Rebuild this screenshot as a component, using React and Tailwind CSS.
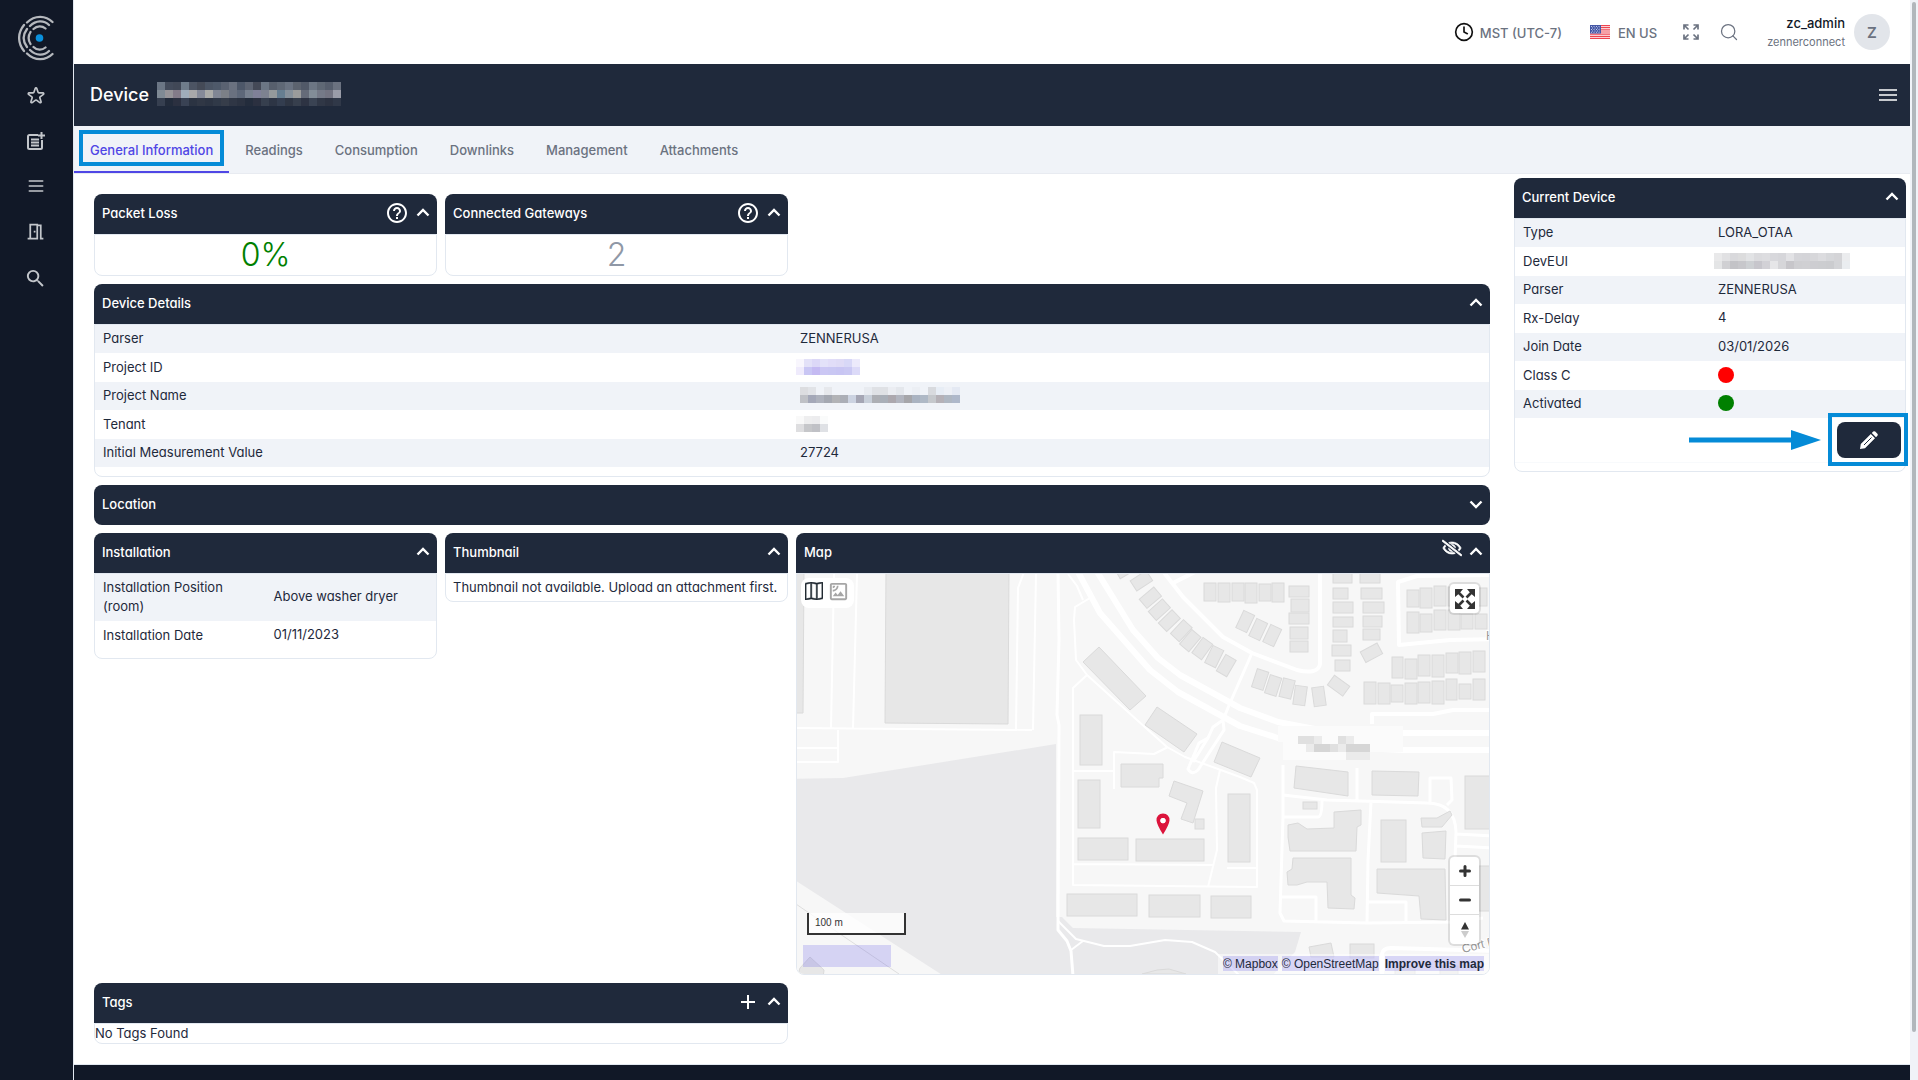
import React, { useState } from 'react';
import { Clock4, Search } from 'lucide-react';
import { MdSearch, MdHelpOutline, MdOutlineMeetingRoom, MdOutlineSatellite, MdAdd } from 'react-icons/md';
import { FaRegEyeSlash } from 'react-icons/fa';
import { BsMap } from 'react-icons/bs';
import { HiOutlineStar, HiOutlineMenu } from 'react-icons/hi';

const tabs = ['General Information', 'Readings', 'Consumption', 'Downlinks', 'Management', 'Attachments'];

// masked values, one list of colours per row of blocks
const masks = {
  title: [
    ['#6b7685', '#434b5b', '#414857', '#6f7c8b', '#4c5463', '#444a57', '#4b5565', '#4e596a', '#5a6272', '#6a7180', '#4d5769', '#5d6473', '#444957', '#6b7685', '#575f6d', '#5f6876', '#6a7382', '#5c636f', '#515968', '#6c7684', '#5f6875', '#565e6d', '#6b7280'],
    ['#7f8a95', '#969499', '#837b89', '#a0adbb', '#a8a8aa', '#858a99', '#aaaba9', '#808694', '#7c8087', '#6a7180', '#5d6779', '#77808f', '#7f8098', '#7d8290', '#959a9c', '#667e91', '#85909b', '#9b9c9c', '#656b79', '#828d98', '#757a88', '#737482', '#9a9ca8'],
    ['#363f50', '#222b3b', '#2b3040', '#394254', '#2b3342', '#303745', '#2c3443', '#303948', '#363d4a', '#2f3645', '#2b3241', '#232c3c', '#2b3040', '#363f4e', '#2d3545', '#333d4f', '#2e3543', '#373f4d', '#2d3343', '#3a4353', '#303746', '#2c3241', '#303848'],
  ],
  projectId: [
    ['#f8f6fd', '#e3e1f8', '#dcd8f7', '#e3e2f9', '#e1ddf8', '#dfdbf6', '#d8d8f7', '#eceafb'],
    ['#efebfc', '#c9c6f4', '#c4baf2', '#cbc7f4', '#c9c7f3', '#c8c5f3', '#cac8f3', '#dcdaf8'],
  ],
  projectName: [
    ['#dcdde0', '#e1e3e7', '#f0f3f8', '#e6e8ec', '#f0f3f8', '#f0f3f8', '#f0f3f8', '#f0f3f8', '#e8ebf0', '#dfe1e5', '#dfe1e5', '#ebedf2', '#e4e7ec', '#f0f3f8', '#eceff4', '#f0f3f8', '#d8dade', '#e7edf5', '#edf0f6', '#e4e9f3'],
    ['#bfc1c6', '#a4a8b8', '#aeb2bd', '#a4a8b1', '#b2b3b6', '#abaeb6', '#ccd3e1', '#a5a6b4', '#c8cfd9', '#adafb4', '#a9afb8', '#aca8ae', '#b2b5bf', '#a6a6aa', '#aab3c1', '#afb9c6', '#c5c8cc', '#b5b1b7', '#afb7c2', '#aeb8ca'],
  ],
  tenant: [
    ['#f9f9f9', '#eeeeef', '#ececee', '#fafbfb'],
    ['#dedee0', '#c6c7ca', '#c0c1c6', '#dfe1e5'],
  ],
  devEui: [
    ['#e9e9ea', '#e1e1e3', '#d9d9dc', '#dcdcdd', '#e2e3e5', '#dbdbde', '#dddde0', '#d8d8dc', '#d6d6da', '#e2e2e5', '#d5d5d9', '#d4d4d8', '#d7d7da', '#dcdcdf', '#d6d7da', '#d4d4d7', '#ebecee'],
    ['#e4e5e6', '#d0d0d3', '#c3c3c7', '#c7c7cb', '#cdd0d3', '#c7c6cc', '#d2d1d6', '#e6e6e8', '#d6d6d9', '#c7c6ca', '#cfcfd2', '#d0d0d3', '#cdcdd1', '#cccdd0', '#cbcccf', '#d3d4d7', '#eaedf0'],
  ],
};

const Masked = ({ rows }) => (
  <div className="inline-block align-middle">
    {rows.map((row, i) => (
      <div key={i} className="flex">
        {row.map((color, j) => <span key={j} className="block h-2 w-2" style={{ backgroundColor: color }} />)}
      </div>
    ))}
  </div>
);

const Dot = ({ className }) => <span className={`block h-4 w-4 rounded-full ${className}`} />;

const deviceDetails = [
  ['Parser', 'ZENNERUSA'],
  ['Project ID', <div className="-ml-1 flex"><Masked rows={masks.projectId} /></div>],
  ['Project Name', <div className="flex"><Masked rows={masks.projectName} /></div>],
  ['Tenant', <div className="-ml-1 flex"><Masked rows={masks.tenant} /></div>],
  ['Initial Measurement Value', '27724'],
];

const currentDevice = [
  ['Type', 'LORA_OTAA'],
  ['DevEUI', <div className="-ml-1 flex"><Masked rows={masks.devEui} /></div>],
  ['Parser', 'ZENNERUSA'],
  ['Rx-Delay', '4'],
  ['Join Date', '03/01/2026'],
  ['Class C', <Dot className="bg-[#ff0000]" />],
  ['Activated', <Dot className="bg-[#008000]" />],
];

const installation = [
  ['Installation Position (room)', 'Above washer dryer'],
  ['Installation Date', '01/11/2023'],
];

const DataTable = ({ rows }) => (
  <table className="w-full table-fixed">
    <tbody>
      {rows.map(([label, value]) => (
        <tr key={label} className="h-[29px] odd:h-7 odd:bg-[#f0f3f8]">
          <th scope="row" className="w-1/2 px-2 pb-[5px] pt-1 text-left font-normal">{label}</th>
          <td className="w-1/2 px-2 pb-[2px]">{value}</td>
        </tr>
      ))}
    </tbody>
  </table>
);

const Chevron = ({ up }) => (
  <svg width="20" height="20" viewBox="0 0 20 20" fill="none" stroke="currentColor" strokeWidth="2.400">
    <path d={up ? 'M4.500 12.500L10 7L15.500 12.500' : 'M4.500 7.500L10 13L15.500 7.500'} />
  </svg>
);

const Panel = ({ title, actions, className = '', children }) => {
  const [open, setOpen] = useState(children !== undefined);

  return (
    <section className={`leading-[19px] ${className}`}>
      <div className={`flex h-10 items-center justify-between bg-[#1f293b] pb-[2px] pl-2 pr-1 text-white ${open ? 'rounded-t-lg' : 'rounded-lg'}`}>
        <h2 className="font-medium">{title}</h2>
        <div className="flex items-center gap-1">
          {actions}
          <button type="button" aria-label={`Toggle ${title}`} onClick={() => setOpen(!open)}>
            <Chevron up={open} />
          </button>
        </div>
      </div>
      {open && <div className="overflow-hidden rounded-b-lg border border-[#e2e8f0]">{children}</div>}
    </section>
  );
};

const HelpButton = () => (
  <button type="button" aria-label="Help"><MdHelpOutline size={24} /></button>
);

const Logo = () => (
  <svg width="36" height="46" viewBox="0 0 36 46" fill="none" stroke="#b5b8bd" strokeWidth="2.300" strokeLinecap="round">
    <circle cx="21.500" cy="23" r="3.800" fill="#0a90dc" stroke="none" />
    <path d="M9 7.500C17 -.5 28 .5 34.500 7M12 11C18 5 26 5 31 10M15.500 14C19 10.500 24 10.500 27.500 13.500" />
    <path d="M9 38.500C17 46.500 28 45.500 34.500 39M12 35C18 41 26 41 31 36M15.500 32C19 35.500 24 35.500 27.500 32.500" />
    <path d="M6 10C-.5 18 -.5 28 6 36M9 14C4.500 20 4.500 26 9 32M12.500 17C10 21 10 25 12.500 29" />
  </svg>
);

const NoteAddIcon = () => (
  <svg width="20" height="20" viewBox="0 0 20 20" fill="none" stroke="currentColor" strokeWidth="2">
    <path d="M12 4H3.500Q2 4 2 5.500V16.500Q2 18 3.500 18H14.500Q16 18 16 16.500V9M5 8.500H13M5 11.500H13M5 14.500H13M15.500 1V8M12 4.500H19" />
  </svg>
);

const MenuIcon = () => (
  <svg width="18" height="14" viewBox="0 0 18 14" stroke="currentColor" strokeWidth="1.500">
    <path d="M0 2H18M0 7H18M0 12H18" />
  </svg>
);

const PencilIcon = () => (
  <svg width="18" height="18" viewBox="0 0 18 18" fill="currentColor">
    <path d="M0 18L.8 13L10.800 3L15 7.200L5 17.200ZM11.800 2L13.200 .6Q14.200 -.2 15.200 .6L17.400 2.800Q18.200 3.800 17.400 4.800L16 6.200Z" />
    <path stroke="#1f293b" strokeWidth="1" d="M4 14L11.500 6.500" />
  </svg>
);

const PinIcon = () => (
  <svg width="14" height="22" viewBox="0 0 14 22" className="absolute left-[359px] top-[239px]">
    <path fill="#dc143c" fillRule="evenodd" d="M7 .5Q13.500 .8 13.500 7.500Q13 12 7 21.500Q1 12 .5 7.500Q.5 .8 7 .5ZM7 5A2.600 2.600 0 1 0 7 10.200A2.600 2.600 0 1 0 7 5Z" />
    <circle cx="7" cy="7.600" r="2.600" fill="#fff" />
  </svg>
);

const Flag = () => (
  <svg width="20" height="14" viewBox="0 0 20 14">
    <path fill="#fff" d="M0 0H20V14H0Z" />
    <path stroke="#ee4450" strokeWidth="1.200" d="M0 .6H20M0 2.700H20M0 4.900H20M0 7H20M0 9.100H20M0 11.300H20M0 13.400H20" />
    <path fill="#4456a5" d="M0 0H11V8.500H0Z" />
    <path stroke="#c3cbe8" strokeWidth="1" strokeDasharray="1 1.500" d="M1 1.500H10M2 3H10M1 4.500H10M2 6H10M1 7.300H10" />
  </svg>
);

const ExpandIcon = () => (
  <svg width="16" height="16" viewBox="0 0 16 16" fill="none" stroke="currentColor" strokeWidth="1.700">
    <path d="M1 5.500V1H5.500M1 1L5.500 5.500M10.500 1H15V5.500M15 1L10.500 5.500M1 10.500V15H5.500M1 15L5.500 10.500M10.500 15H15V10.500M15 15L10.500 10.500" />
  </svg>
);

const FullscreenIcon = () => (
  <svg width="20" height="20" viewBox="0 0 20 20" fill="#333" stroke="#333">
    <path stroke="none" d="M0 0H8L5.500 3L3 5.500L0 8ZM20 0V8L17 5.500L14.500 3L12 0ZM0 20V12L3 14.500L5.500 17L8 20ZM20 20H12L14.500 17L17 14.500L20 12Z" />
    <path strokeWidth="2.600" d="M3 3L8.500 8.500M17 3L11.500 8.500M3 17L8.500 11.500M17 17L11.500 11.500" />
  </svg>
);

// map shapes share one coordinate system with the viewBox below
const blocks = [
  [1204, 583, 12, 18], [1218, 583, 12, 19], [1232, 583, 12, 18], [1245, 583, 12, 20], [1259, 584, 12, 17], [1272, 583, 12, 19],
  [1289, 586, 20, 11], [1291, 599, 18, 13], [1289, 613, 20, 11], [1290, 627, 18, 12], [1290, 641, 18, 11],
  [1333, 572, 19, 11], [1333, 588, 15, 11], [1333, 602, 20, 11], [1333, 617, 20, 10], [1333, 630, 14, 12], [1332, 645, 19, 11], [1335, 660, 15, 11],
  [1360, 572, 20, 11], [1361, 588, 21, 11], [1363, 602, 21, 11], [1363, 616, 19, 11], [1363, 629, 17, 11],
  [1407, 590, 12, 17], [1420, 588, 12, 20], [1434, 586, 12, 20], [1448, 587, 12, 19], [1461, 588, 12, 18], [1475, 588, 12, 18],
  [1407, 612, 12, 21], [1420, 614, 12, 18], [1434, 610, 12, 20], [1448, 610, 12, 20], [1461, 614, 12, 15], [1475, 614, 12, 15],
  [1392, 657, 11, 21], [1405, 659, 12, 20], [1418, 655, 12, 21], [1432, 655, 12, 22], [1446, 653, 12, 20], [1459, 652, 12, 22], [1473, 651, 12, 21],
  [1364, 682, 12, 22], [1378, 683, 12, 21], [1391, 685, 12, 17], [1405, 683, 12, 21], [1418, 682, 12, 21], [1432, 681, 12, 23], [1446, 679, 11, 21], [1459, 684, 12, 15], [1473, 679, 12, 21],
  [1080, 715, 22, 50], [1078, 780, 22, 48], [1078, 838, 50, 22], [1136, 839, 68, 22], [1195, 819, 9, 10], [1228, 794, 22, 68],
  [1067, 894, 70, 22], [1149, 895, 51, 22], [1211, 896, 40, 22], [1303, 802, 14, 7], [1465, 776, 30, 53], [1381, 820, 25, 42],
  [1479, 866, 16, 45], [1350, 944, 24, 14], [1395, 966, 20, 10], [1440, 966, 18, 10],
];

const houses = [
  [1125, 569, 60], [1141, 581, 57], [1150, 598, 50], [1159, 610, 48], [1169, 621, 46], [1181, 631, 43], [1190, 641, 40], [1202, 649, 36], [1214, 657, 26], [1226, 666, 30],
  [1245, 622, 25], [1258, 630, 25], [1272, 636, 25],
  [1260, 680, 18], [1273, 686, 18], [1287, 689, 14], [1300, 696, 8], [1319, 697, -8], [1339, 686, -54], [1371, 653, 62],
];

const buildings = [
  '886,570 1009,570 1008,724 885,723',
  '790,570 804,570 803,713 790,713',
  '1099,647 1146,696 1130,710 1083,662',
  '1157,707 1197,734 1184,752 1145,725',
  '1121,764 1163,764 1163,778 1159,778 1159,787 1121,787',
  '1174,781 1203,791 1193,823 1181,819 1187,803 1169,796',
  '1222,742 1260,758 1251,777 1214,762',
  '1296,766 1348,772 1348,796 1294,788',
  '1372,771 1419,772 1418,796 1372,795',
  '1288,825 1298,823 1307,829 1334,828 1334,812 1361,810 1361,825 1357,827 1356,851 1290,851 1288,837',
  '1293,858 1351,858 1351,895 1355,898 1354,909 1328,908 1327,882 1307,882 1297,885 1288,885 1287,872 1292,869',
  '1421,818 1437,818 1450,811 1452,815 1442,827 1422,827',
  '1422,833 1446,831 1445,859 1423,858',
  '1377,869 1445,869 1446,920 1421,919 1419,896 1377,893',
  '1309,947 1331,943 1334,957 1311,957',
  '797,978 800,968 810,957 824,970 823,978',
  '1142,974 1157,970 1169,969 1186,974',
];

const MapDrawing = () => (
  <svg className="absolute inset-0 h-full w-full" viewBox="797 574 692 400" preserveAspectRatio="xMidYMid slice">
    <path fill="#f7f7f7" d="M0 0H2400V1400H0Z" />
    <path fill="#e9e9eb" d="M790 779L843 778L1056 744V917H1062L1073 928L1301 932L1295 952L1268 980H950L790 877Z" />
    <path stroke="#dedede" d="M790 900L899 974" />
    <g fill="none" stroke="#fff" strokeWidth="2" strokeLinejoin="round">
      <path d="M834 574L831 728M857 574L853 729M790 728L1032 730M790 748H838M838 730V762H790M1024 572L1018 588L1016 729M1036 574L1033 730" />
      <path strokeWidth="3" d="M1058 572L1059 640L1057 715L1059 725L1058 930L1067 941L1071 951L1073 976" />
      <path d="M1068 574L1077 586L1083 600M1090 598L1075 607L1074 620L1076 660L1087 675L1167 747L1185 757L1240 777L1254 783L1257 790V887L1073 885V688L1087 675M1073 771H1114M1114 789V752L1154 754L1168 747M1073 864L1213 865M1220 770L1216 788L1217 850L1208 887M1227 868H1257" />
      <path strokeWidth="6" d="M1077 570L1100 613L1150 670L1178 692L1240 726L1278 738L1340 747L1403 750H1495M1096 570L1133 630L1158 658L1180 675L1240 708L1278 722L1320 730L1403 733H1495" />
      <path strokeWidth="4" d="M1162 570L1183 597L1223 637L1252 653L1297 670Q1318 675 1320 664V570M1171 584L1195 572M1495 575L1417 576L1398 582L1399 645L1450 640L1495 639M1372 724V714H1433L1453 710H1495" />
      <path strokeWidth="3" d="M1252 653L1230 703L1223 720L1213 727L1208 738L1193 762M1223 720L1224 730L1198 770Q1192 776 1188 769L1199 743L1208 738" />
      <path strokeWidth="3" d="M1283 765V817L1280 913L1284 921L1367 923L1457 922L1483 918M1283 795L1327 800L1427 803Q1455 803 1456 832L1455 860M1357 768V800M1430 802V778H1451L1452 800L1447 805M1283 817H1318Q1322 817 1322 800M1371 802L1368 860L1367 923M1282 897H1316V922M1368 902H1406V922M1456 834L1495 836M1456 846L1495 848" />
      <path strokeWidth="4" d="M1382 976V954Q1383 948 1391 948L1495 951" />
      <path d="M1058 921L1076 939L1104 946H1130L1165 940L1192 942L1215 952L1240 976M1071 950L1083 941" />
    </g>
    <g fill="#e7e7e7" stroke="#dadada">
      {blocks.map(([x, y, w, h]) => <rect key={`${x}-${y}`} x={x} y={y} width={w} height={h} />)}
      {houses.map(([x, y, angle]) => <rect key={`${x}-${y}`} x={x - 6} y={y - 10} width="12" height="19" transform={`rotate(${angle} ${x} ${y})`} />)}
      {buildings.map((points) => <polygon key={points} points={points} />)}
    </g>
    <path fill="#fbfbfb" d="M1278 726H1403V752H1370V760H1283V742H1278Z" />
    <path fill="#e0e0e0" d="M1298 736H1314V744H1298ZM1338 736H1346V744H1338ZM1330 744H1338V752H1330Z" />
    <path fill="#ebebeb" d="M1314 736H1322V744H1314ZM1346 736H1354V744H1346ZM1306 744H1314V752H1306ZM1338 744H1346V752H1338ZM1346 752H1370V760H1346Z" />
    <path fill="#d6d6d6" d="M1314 744H1330V752H1314ZM1346 744H1370V752H1346Z" />
    <g fill="#999" stroke="#fff" strokeWidth="2" paintOrder="stroke" fontSize="12" fontFamily="Liberation Sans, sans-serif">
      <text x="1463" y="953" transform="rotate(-14 1463 953)">Cort P</text>
      <text x="1486" y="640">H</text>
    </g>
  </svg>
);

const MapView = () => (
  <div className="relative h-[400px] overflow-hidden font-['Liberation_Sans',sans-serif]">
    <MapDrawing />
    <PinIcon />

    <div className="absolute left-1 top-1 flex h-[30px] items-center gap-1 rounded-lg bg-white px-1 pb-1">
      <button type="button" aria-label="Street map" className="text-[#222b33]"><BsMap size={18} stroke="currentColor" strokeWidth={0.5} /></button>
      <button type="button" aria-label="Satellite" className="text-[#a6a6a6]"><MdOutlineSatellite size={23} /></button>
    </div>

    <button type="button" aria-label="Fullscreen" className="absolute right-[10px] top-[10px] flex h-[29px] w-[29px] items-center justify-center rounded-sm bg-white ring-2 ring-black/10">
      <FullscreenIcon />
    </button>

    <div className="absolute bottom-[30px] right-[10px] flex w-[29px] flex-col divide-y divide-[#ddd] rounded-sm bg-white ring-2 ring-black/10">
      <button type="button" aria-label="Zoom in" className="flex h-[29px] items-center justify-center">
        <svg width="12" height="12" viewBox="0 0 12 12"><path stroke="#333" strokeWidth="3" strokeLinecap="round" d="M1.500 6H10.500M6 1.500V10.500" /></svg>
      </button>
      <button type="button" aria-label="Zoom out" className="flex h-[29px] items-center justify-center">
        <svg width="12" height="12" viewBox="0 0 12 12"><path stroke="#333" strokeWidth="3" strokeLinecap="round" d="M1.500 6H10.500" /></svg>
      </button>
      <button type="button" aria-label="Reset bearing" className="flex h-[29px] items-center justify-center">
        <svg width="8" height="16" viewBox="0 0 8 16"><path fill="#333" d="M0 7.500H8L4 0Z" /><path fill="#ccc" d="M0 9H8L4 16Z" /></svg>
      </button>
    </div>

    <div className="absolute bottom-[39px] left-[10px] h-[22px] w-[99px] border-2 border-t-0 border-[#333] bg-white/75 px-[6px] text-[10px] leading-[19px] text-[#333]">100 m</div>
    <div className="absolute bottom-[7px] left-[6px] h-[22px] w-[88px] bg-[#4f46e5]/20" />
    <div className="absolute bottom-0 right-0 flex h-5 gap-1 bg-white/50 px-[5px] text-[12px] leading-4 text-[#1e293b]">
      <a href="#mapbox" className="mt-[2px] h-[15px] bg-[#4f46e5]/20">© Mapbox</a>
      <a href="#osm" className="mt-[2px] h-[15px] bg-[#4f46e5]/20">© OpenStreetMap</a>
      <a href="#improve" className="ml-[2px] mt-[2px] h-[15px] bg-[#4f46e5]/20 font-bold">Improve this map</a>
    </div>
  </div>
);

const SideBar = () => (
  <aside className="flex w-[74px] shrink-0 flex-col items-center border-r border-[#e2e8f0] bg-[#111827] pr-[2px] pt-[15px] text-[#c3c6cb]">
    <a href="#home" aria-label="Home"><Logo /></a>
    <nav className="mt-[25px] flex flex-col items-center gap-[25px]">
      <button type="button" aria-label="Favorites"><HiOutlineStar size={20} /></button>
      <button type="button" aria-label="Add entry"><NoteAddIcon /></button>
      <button type="button" aria-label="Lists"><HiOutlineMenu size={20} /></button>
      <button type="button" aria-label="Rooms"><MdOutlineMeetingRoom size={21} /></button>
      <button type="button" aria-label="Search"><MdSearch size={23} /></button>
    </nav>
  </aside>
);

const TopBar = () => (
  <header className="flex h-16 items-center justify-end pr-5 font-medium text-[#6b7280]">
    <button type="button" className="flex items-center gap-[6px]">
      <Clock4 size={20} className="text-[#111]" />
      <span className="pt-[3px]">MST (UTC-7)</span>
    </button>
    <button type="button" className="ml-7 flex items-center gap-2">
      <Flag />
      <span className="pt-[3px]">EN US</span>
    </button>
    <button type="button" aria-label="Fullscreen" className="ml-[26px]"><ExpandIcon /></button>
    <button type="button" aria-label="Search" className="ml-5"><Search size={20} strokeWidth={1.5} /></button>
    <div className="ml-7 pt-[2px] text-right leading-[19px]">
      <div className="text-[#111827]">zc_admin</div>
      <div className="text-[11px] font-normal">zennerconnect</div>
    </div>
    <button type="button" aria-label="Account" className="ml-[9px] h-9 w-9 rounded-full bg-[#e2e5ea] pt-[2px] text-[15px] font-semibold">Z</button>
  </header>
);

const App = () => {
  const [activeTab, setActiveTab] = useState('General Information');

  return (
    <div className="flex min-h-screen bg-white font-['Inter',sans-serif] text-[13px] text-[#1e293b]">
      <SideBar />
      <div className="flex min-w-0 flex-1 flex-col">
        <TopBar />

        <div className="flex h-[62px] items-center justify-between bg-[#1f293b] pl-4 pr-[13px] text-white">
          <h1 className="flex items-center gap-2 pb-[2px] text-[18px] font-medium">Device <Masked rows={masks.title} /></h1>
          <button type="button" aria-label="Menu"><MenuIcon /></button>
        </div>

        <div role="tablist" className="flex h-12 border-b border-[#e8ebf1] bg-[#f0f3f8] font-medium">
          {tabs.map(tab => (
            <button
              key={tab}
              type="button"
              role="tab"
              aria-selected={activeTab === tab}
              onClick={() => setActiveTab(tab)}
              className={`relative border-b-2 px-4 pt-1 ${activeTab === tab ? 'border-[#4f46e5] text-[#4f46e5]' : 'border-transparent text-[#6b7280]'}`}
            >
              {tab}
              {activeTab === tab && <span className="absolute bottom-[5px] left-[5px] right-[5px] top-1 border-4 border-[#058bd7]" />}
            </button>
          ))}
        </div>

        <div className="flex items-start gap-6 pr-1 [font-feature-settings:'cv11']">
          <main className="grid flex-1 grid-cols-4 items-start gap-2 py-5 pl-5">
            <Panel title="Packet Loss" actions={<HelpButton />}>
              <div className="text-center text-[32px] font-light leading-10 text-[#008000]">0%</div>
            </Panel>
            <Panel title="Connected Gateways" actions={<HelpButton />}>
              <div className="text-center text-[32px] font-light leading-10 text-[#8f98a6]">2</div>
            </Panel>

            <Panel title="Device Details" className="col-span-4">
              <div className="pb-[9px]"><DataTable rows={deviceDetails} /></div>
            </Panel>

            <Panel title="Location" className="col-span-4" />

            <Panel title="Installation">
              <div className="pb-2"><DataTable rows={installation} /></div>
            </Panel>
            <Panel title="Thumbnail">
              <p className="whitespace-nowrap px-[7px] py-1">Thumbnail not available. Upload an attachment first.</p>
            </Panel>
            <Panel
              title="Map"
              className="col-span-2"
              actions={<button type="button" aria-label="Hide map" className="mb-2"><FaRegEyeSlash size={20} stroke="currentColor" strokeWidth={22} /></button>}
            >
              <MapView />
            </Panel>

            <Panel title="Tags" className="col-span-2" actions={<button type="button" aria-label="Add tag"><MdAdd size={24} /></button>}>
              <p>No Tags Found</p>
            </Panel>
          </main>

          <aside className="relative w-[392px] shrink-0 pt-1">
            <Panel title="Current Device">
              <DataTable rows={currentDevice} />
              <div className="mb-2 flex items-center justify-end gap-4 border-b border-[#f8fafc] py-1 pr-1">
                <svg width="132" height="20" viewBox="0 0 132 20" fill="#058bd7"><path d="M0 7.500H102V0L132 10L102 20V12.500H0Z" /></svg>
                <button type="button" aria-label="Edit device" className="flex h-9 w-16 items-center justify-center rounded-lg bg-[#1f293b] text-white">
                  <PencilIcon />
                </button>
              </div>
            </Panel>
            <div className="pointer-events-none absolute -right-[2px] bottom-[6px] h-[53px] w-20 border-4 border-[#058bd7]" />
          </aside>
        </div>

        <footer className="min-h-4 flex-1 border-t border-[#e2e8f0] bg-[#111827]" />
      </div>
      <div className="w-2 shrink-0 bg-[#f0f3f8] px-[2px] pb-12 pt-[2px]">
        <div className="h-full rounded-full bg-[#b1b7bc]" />
      </div>
    </div>
  );
};

export default App;
